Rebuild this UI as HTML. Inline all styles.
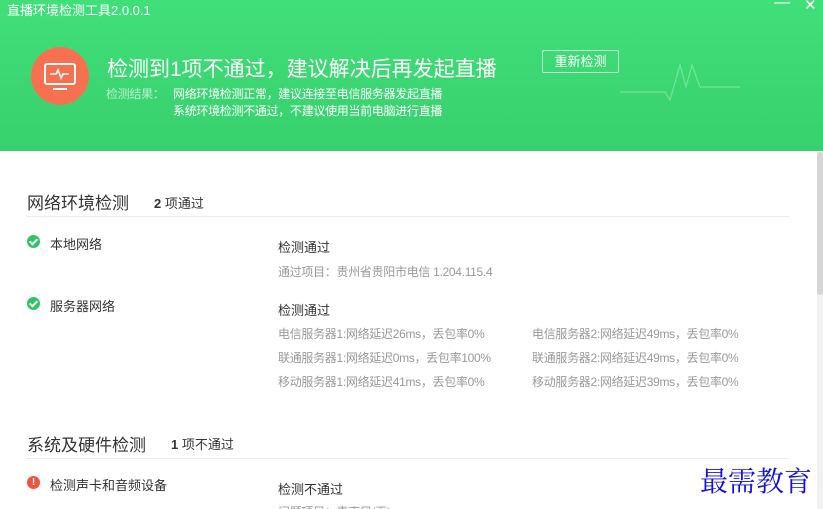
<!DOCTYPE html>
<html><head><meta charset="utf-8"><style>
*{margin:0;padding:0;box-sizing:border-box}
html,body{width:823px;height:509px;overflow:hidden}
body{background:#fff;font-family:"Liberation Sans","Noto Sans CJK SC",sans-serif;position:relative;color:#333}
.hdr{position:absolute;left:0;top:0;width:823px;height:151px;background:linear-gradient(180deg,#41df7a,#37d06d)}
.t{position:absolute;color:#fff}
.sb{position:absolute;left:817px;top:152px;width:6px;height:357px;background:#f1f1f1}
.th{position:absolute;left:817px;top:152px;width:6px;height:143px;background:#d6d6d6;border-radius:3px}
.g{position:absolute;font-size:12px;color:#999;letter-spacing:-0.3px}
.ok{position:absolute;width:13px;height:13px;border-radius:50%;background:#2fc464}
.ok:after{content:"";position:absolute;left:4px;top:2px;width:3px;height:6px;border:solid #fff;border-width:0 2px 2px 0;transform:rotate(45deg)}
.line{position:absolute;left:26px;width:763px;height:1px;background:#ececec}
</style></head><body>
<div class="hdr">
<div class="t" style="left:7px;top:0;font-size:13px">直播环境检测工具2.0.0.1</div>
<div class="t" style="left:774px;top:-6px;font-size:16px">—</div>
<div class="t" style="left:804px;top:-4px;font-size:15px">✕</div>
<div style="position:absolute;left:31px;top:47px;width:58px;height:58px;border-radius:50%;background:#f7704f"></div>
<svg style="position:absolute;left:43px;top:62px" width="34" height="30" viewBox="0 0 34 30"><rect x="2" y="2" width="30" height="20" rx="2" fill="none" stroke="#fff" stroke-width="2"/><path d="M7 12h6l2-4 3 8 2-4h6" fill="none" stroke="#fff" stroke-width="1.6"/><rect x="10" y="26" width="14" height="2" fill="#fff"/></svg>
<div class="t" style="left:107px;top:53px;font-size:21px">检测到1项不通过，建议解决后再发起直播</div>
<div class="t" style="left:542px;top:50px;width:77px;height:23px;border:1px solid rgba(255,255,255,.7);border-radius:2px;font-size:13px;text-align:center;line-height:21px">重新检测</div>
<div class="t" style="left:106px;top:85px;font-size:12px;color:#b8f0cc;letter-spacing:-0.3px">检测结果：</div>
<div class="t" style="left:173px;top:85px;font-size:12px;letter-spacing:-0.3px">网络环境检测正常，建议连接至电信服务器发起直播</div>
<div class="t" style="left:173px;top:102px;font-size:12px;letter-spacing:-0.3px">系统环境检测不通过，不建议使用当前电脑进行直播</div>
<svg style="position:absolute;left:620px;top:60px" width="200" height="70"><path d="M0 32H45l5 8 10-35 6 22 6-22 8 22h40" fill="none" stroke="rgba(255,255,255,.3)" stroke-width="1.2"/></svg>
</div>
<div class="sb"></div><div class="th"></div>
<div style="position:absolute;left:27px;top:189px;font-size:17px;color:#333">网络环境检测</div>
<div style="position:absolute;left:154px;top:193px;font-size:13px"><b>2</b> 项通过</div>
<div class="line" style="top:216px"></div>
<div class="ok" style="left:27px;top:235px"></div>
<div style="position:absolute;left:50px;top:234px;font-size:13px">本地网络</div>
<div style="position:absolute;left:278px;top:237px;font-size:13px">检测通过</div>
<div class="g" style="left:278px;top:263px">通过项目：贵州省贵阳市电信 1.204.115.4</div>
<div class="ok" style="left:27px;top:297px"></div>
<div style="position:absolute;left:50px;top:296px;font-size:13px">服务器网络</div>
<div style="position:absolute;left:278px;top:300px;font-size:13px">检测通过</div>
<div class="g" style="left:278px;top:325px">电信服务器1:网络延迟26ms，丢包率0%</div>
<div class="g" style="left:532px;top:325px">电信服务器2:网络延迟49ms，丢包率0%</div>
<div class="g" style="left:278px;top:349px">联通服务器1:网络延迟0ms，丢包率100%</div>
<div class="g" style="left:532px;top:349px">联通服务器2:网络延迟49ms，丢包率0%</div>
<div class="g" style="left:278px;top:373px">移动服务器1:网络延迟41ms，丢包率0%</div>
<div class="g" style="left:532px;top:373px">移动服务器2:网络延迟39ms，丢包率0%</div>
<div style="position:absolute;left:27px;top:431px;font-size:17px">系统及硬件检测</div>
<div style="position:absolute;left:171px;top:434px;font-size:13px"><b>1</b> 项不通过</div>
<div class="line" style="top:458px"></div>
<div style="position:absolute;left:27px;top:476px;width:13px;height:13px;border-radius:50%;background:#f0543f;color:#fff;font-size:10px;font-weight:bold;text-align:center;line-height:13px">!</div>
<div style="position:absolute;left:50px;top:475px;font-size:13px">检测声卡和音频设备</div>
<div style="position:absolute;left:278px;top:479px;font-size:13px">检测不通过</div>
<div class="g" style="left:278px;top:503px">问题项目：麦克风(无)</div>
<div style="position:absolute;left:700px;top:460px;font-size:28px;color:#1010e0;font-family:'Noto Serif CJK SC',serif">最需教育</div>
</body></html>
